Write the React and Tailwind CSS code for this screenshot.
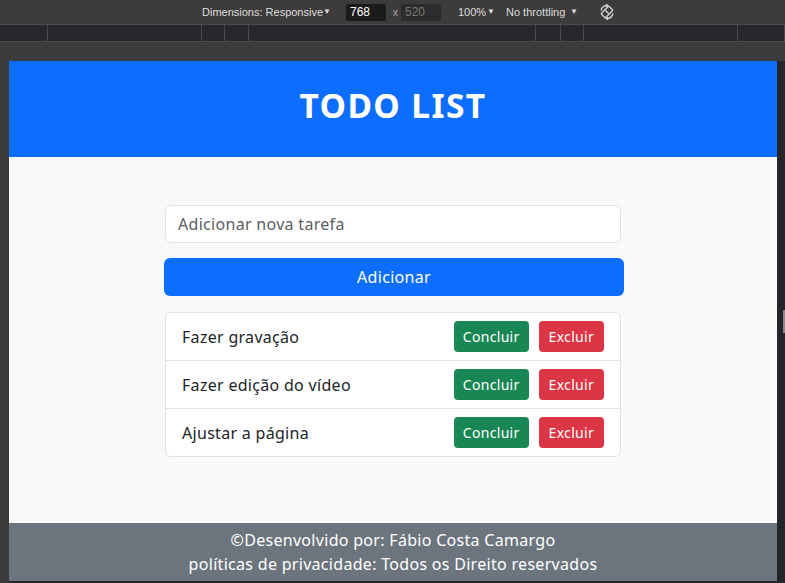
import { useState } from 'react';

const TAREFAS_INICIAIS = [
  { id: 1, texto: 'Fazer gravação' },
  { id: 2, texto: 'Fazer edição do vídeo' },
  { id: 3, texto: 'Ajustar a página' },
];

const RULER = [48, 154, 23, 24, 287, 25, 23, 154, 47];

function RotateIcon() {
  return (
    <svg width="18" height="18" viewBox="0 0 18 18" fill="none" stroke="#cfcfcf" strokeWidth="1.4">
      <rect x="6" y="3.5" width="6" height="11" rx="1" transform="rotate(45 9 9)" />
      <line x1="7.2" y1="7.2" x2="10.8" y2="10.8" />
      <path d="M3 7.5 A6.5 6.5 0 0 1 9.5 2.5" />
      <path d="M15 10.5 A6.5 6.5 0 0 1 8.5 15.5" />
      <path d="M8 1.2 L9.8 2.5 L8.2 4" />
      <path d="M10 16.8 L8.2 15.5 L9.8 14" />
    </svg>
  );
}

function DevToolbar() {
  return (
    <div className="flex flex-col whitespace-nowrap font-['Liberation_Sans',sans-serif] text-[11px] text-[#dcdcdc]">
      <div className="flex h-[24px] items-center bg-[#3c3c3c] pl-[202px]">
        <span className="flex w-[124px] items-center justify-between">
          Dimensions: Responsive <span className="text-[8px]">▼</span>
        </span>
        <span className="ml-[20px] flex h-[17px] w-[40px] items-center rounded-[2px] bg-[#1b1b1b] pl-[4px] text-[12px] text-white">
          768
        </span>
        <span className="ml-[4px] w-[11px] text-center text-[10px] text-[#aaa]">x</span>
        <span className="flex h-[17px] w-[40px] items-center rounded-[2px] bg-[#2c2c2c] pl-[4px] text-[12px] text-[#777]">
          520
        </span>
        <span className="ml-[17px] flex w-[37px] items-center justify-between">
          100% <span className="text-[8px]">▼</span>
        </span>
        <span className="ml-[11px] flex w-[72px] items-center justify-between">
          No throttling <span className="text-[8px]">▼</span>
        </span>
        <span className="ml-[20px] flex">
          <RotateIcon />
        </span>
      </div>
      <div className="flex h-[18px] border-y border-y-[#4d4d4d] bg-[#27282b]">
        {RULER.map((w, i) => (
          <div
            key={i}
            className="h-full shrink-0 border-r border-r-[#4a4a4a]"
            style={{ width: w }}
          />
        ))}
      </div>
    </div>
  );
}

export default function App() {
  const [tarefas, setTarefas] = useState(TAREFAS_INICIAIS);
  const [nova, setNova] = useState('');

  const adicionar = () => {
    if (!nova.trim()) return;
    setTarefas((prev) => [...prev, { id: Date.now(), texto: nova.trim() }]);
    setNova('');
  };

  const excluir = (id) => setTarefas((prev) => prev.filter((t) => t.id !== id));

  return (
    <div className="relative flex h-[583px] w-[785px] flex-col overflow-hidden bg-[#3c3c3c]">
      <DevToolbar />

      {/* Viewport emulado */}
      <div className="ml-[9px] mt-[19px] flex flex-1 bg-[#242529]">
        <div className="flex h-[520px] w-[768px] flex-col bg-[#f8f9fa] font-['Noto_Sans',sans-serif] tracking-[0.3px] text-[#212529]">
          {/* Cabeçalho */}
          <header className="bg-[#0d6efd] py-6 text-center">
            <h1 className="mb-2 text-[33.5px] font-bold leading-[40px] tracking-[1.4px] text-white">
              TODO LIST
            </h1>
          </header>

          {/* Conteúdo */}
          <main className="flex flex-1 justify-center pl-[2px] pt-12">
            <div className="flex w-[460px] flex-col">
              <input
                value={nova}
                onChange={(e) => setNova(e.target.value)}
                placeholder="Adicionar nova tarefa"
                className="mb-[15px] ml-[1px] mr-[3px] h-[38px] rounded-[6px] border border-[#dee2e6] bg-white px-3 text-[16px] outline-none placeholder:text-[#5b5e62]"
              />
              <button
                onClick={adicionar}
                className="h-[38px] rounded-[6px] bg-[#0d6efd] text-[16px] text-white"
              >
                Adicionar
              </button>

              <ul className="ml-[1px] mr-[3px] mt-4 rounded-[6px] border border-[#dee2e6] bg-white">
                {tarefas.map((t, i) => (
                  <li
                    key={t.id}
                    className={`flex items-center justify-between px-4 py-2 ${
                      i > 0 ? 'border-t border-t-[#dee2e6]' : ''
                    }`}
                  >
                    <span className="text-[16px]">{t.texto}</span>
                    <div className="flex gap-[10px]">
                      <button className="h-[31px] rounded-[4px] bg-[#198754] px-[9px] text-[14px] text-white">
                        Concluir
                      </button>
                      <button
                        onClick={() => excluir(t.id)}
                        className="h-[31px] rounded-[4px] bg-[#dc3545] px-[10px] text-[14px] text-white"
                      >
                        Excluir
                      </button>
                    </div>
                  </li>
                ))}
              </ul>
            </div>
          </main>

          {/* Rodapé */}
          <footer className="bg-[#6c757d] py-[5px] text-center text-[16px] leading-[24px] text-white">
            <p>©Desenvolvido por: Fábio Costa Camargo</p>
            <p>políticas de privacidade: Todos os Direito reservados</p>
          </footer>
        </div>
      </div>

      <div className="absolute right-0 top-[310px] h-[23px] w-[2px] bg-[#8a8a8a]" />
    </div>
  );
}
